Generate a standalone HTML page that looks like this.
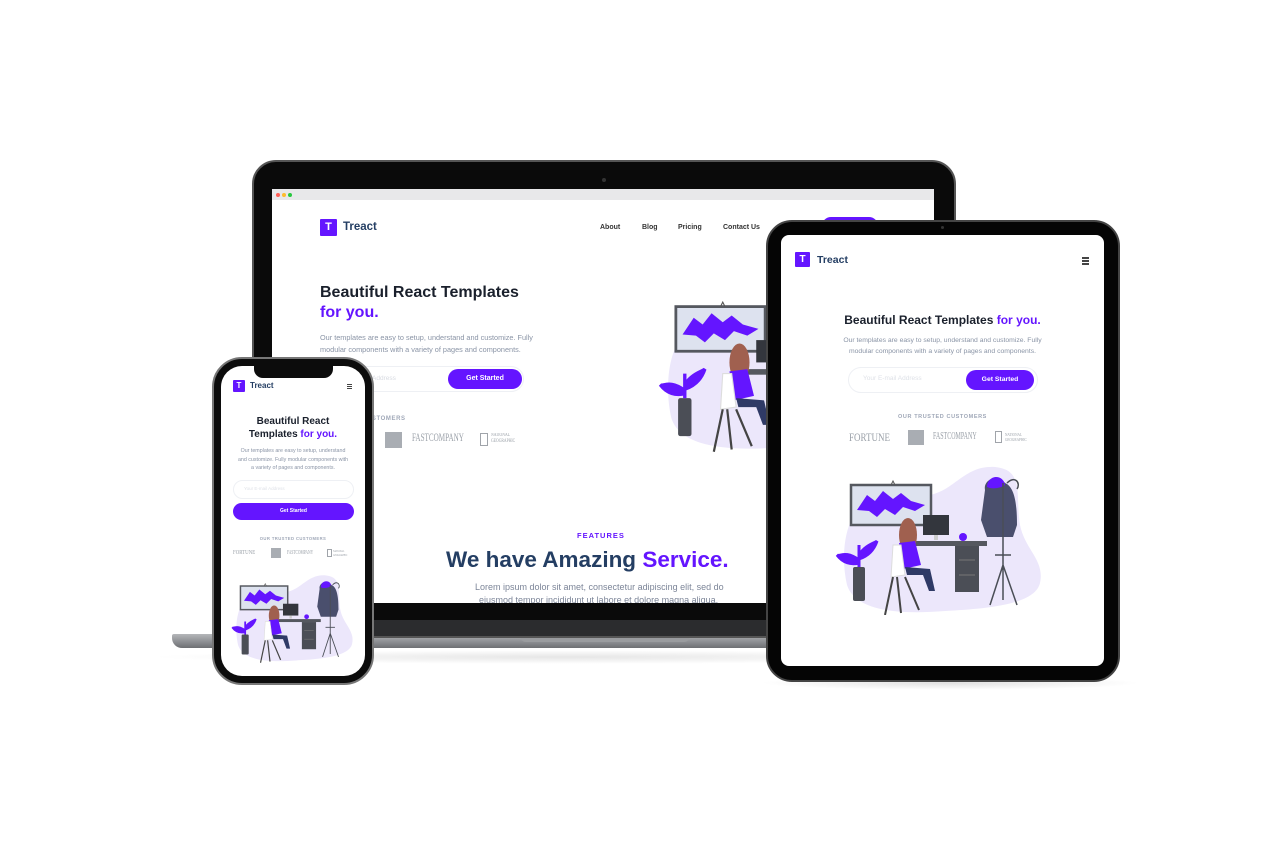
<!DOCTYPE html>
<html><head><meta charset="utf-8"><style>
*{margin:0;padding:0;box-sizing:border-box}
body{width:1280px;height:853px;background:#fff;position:relative;overflow:hidden;font-family:"Liberation Sans",Arial,sans-serif}
.a{position:absolute}
.t{position:absolute;white-space:nowrap;line-height:1}
.b{font-weight:bold}
.p{color:#6415ff}
.d{color:#243e63}
.g{color:#8a94a6}
.logo{position:absolute;background:#6415ff;color:#fff;font-weight:bold;text-align:center;border-radius:1px}
.btn{position:absolute;background:#6415ff;color:#fff;font-weight:bold;text-align:center;border-radius:99px}
.pill{position:absolute;border:1px solid #eef0f4;border-radius:99px;background:#fff}
.lg{position:absolute;color:#9aa0a8;font-family:"Liberation Serif",serif;white-space:nowrap;line-height:1;transform-origin:0 0;transform:scaleX(.75)}
.box{position:absolute;background:#a9adb3}
.hb{position:absolute;height:1.6px;background:#444}
</style></head><body>
<svg width="0" height="0" style="position:absolute">
<defs>
<g id="il">
<path d="M30 40 C10 50 5 90 12 120 C20 145 60 150 110 146 C150 144 200 140 205 118 C210 95 190 85 185 60 C180 30 190 5 160 2 C130 0 120 25 95 30 C70 34 45 30 30 40Z" fill="#ece7fb"/>
<rect x="16" y="20" width="80" height="40" fill="#dde2ef" stroke="#55585f" stroke-width="2.5"/>
<path d="M22 45 L32 30 L40 36 L48 26 L58 34 L66 28 L76 36 L90 40 L80 46 L68 42 L60 50 L50 44 L42 52 L34 46 Z" fill="#6415ff"/>
<path d="M56 20 L58 16 L60 20" stroke="#555" fill="none"/>
<rect x="88" y="50" width="26" height="20" fill="#33363d"/>
<rect x="99" y="70" width="4" height="5" fill="#ccc"/>
<rect x="70" y="76" width="82" height="5" fill="#55585f"/>
<rect x="120" y="81" width="24" height="46" fill="#4b4e56"/>
<line x1="124" y1="95" x2="140" y2="95" stroke="#777"/><line x1="124" y1="110" x2="140" y2="110" stroke="#777"/>
<circle cx="128" cy="72" r="4" fill="#6415ff"/>
<ellipse cx="73" cy="70" rx="9" ry="17" fill="#a0604f"/>
<path d="M64 78 L80 76 L86 100 L68 104 Z" fill="#6415ff"/>
<path d="M58 80 L66 80 L70 110 L56 112 Z" fill="#fff" stroke="#ddd"/>
<path d="M70 102 L95 104 L100 126 L94 126 L88 110 L72 110Z" fill="#2f3a66"/>
<path d="M58 112 L50 150 M62 112 L66 148 M70 112 L84 145" stroke="#444" stroke-width="2"/>
<rect x="18" y="102" width="12" height="34" rx="2" fill="#4b4e56"/>
<path d="M24 102 L24 80 M24 95 C10 85 5 92 2 90 C8 98 16 100 24 98 M24 90 C30 80 40 78 42 76 C38 88 30 92 24 94" stroke="#6415ff" stroke-width="3" fill="#6415ff"/>
<path d="M150 25 C148 15 162 8 170 18 C180 22 182 40 182 60 L178 72 L152 72 L146 55 Z" fill="#4a4f6d"/>
<path d="M152 22 C152 10 168 8 170 20 C164 24 156 24 152 22Z" fill="#6415ff"/>
<path d="M168 18 L168 135 M168 100 L155 140 M168 100 L182 140 M160 90 L176 90 M172 18 C180 10 186 18 182 24" stroke="#4a4e56" stroke-width="1.5" fill="none"/>
</g>
</defs>
</svg>

<div class="a" style="left:150px;top:650px;width:830px;height:14px;border-radius:50%;background:radial-gradient(#e6e6e6,rgba(255,255,255,0) 70%)"></div>
<div class="a" style="left:760px;top:676px;width:380px;height:14px;border-radius:50%;background:radial-gradient(#e0e0e0,rgba(255,255,255,0) 70%)"></div>

<!-- LAPTOP -->
<div class="a" style="left:172px;top:634px;width:790px;height:14px;background:linear-gradient(#b5b7ba,#6d6f73);border-radius:2px 2px 10px 10px"></div>
<div class="a" style="left:520px;top:636px;width:170px;height:6px;background:#9a9c9f;border-radius:0 0 6px 6px"></div>
<div class="a" style="left:252px;top:160px;width:704px;height:478px;background:#0a0a0a;border-radius:24px 24px 4px 4px;border:2px solid #555"></div>
<div class="a" style="left:254px;top:620px;width:700px;height:16px;background:#2b2c2e"></div>
<div class="a" style="left:272px;top:189px;width:662px;height:414px;background:#fff;overflow:hidden">
 <div class="a" style="left:0;top:0;width:662px;height:11px;background:#e8e8ea"></div>
 <div class="a" style="left:4px;top:4px;width:4px;height:4px;border-radius:50%;background:#ff5f57"></div>
 <div class="a" style="left:10px;top:4px;width:4px;height:4px;border-radius:50%;background:#febc2e"></div>
 <div class="a" style="left:16px;top:4px;width:4px;height:4px;border-radius:50%;background:#28c840"></div>
 <div class="logo" style="left:48px;top:30px;width:17px;height:17px;font-size:11px;line-height:17px">T</div>
 <div class="t b d" style="left:71px;top:33px;font-size:11.5px">Treact</div>
 <div class="t b" style="left:328px;top:35px;font-size:7px;color:#333">About</div>
 <div class="t b" style="left:370px;top:35px;font-size:7px;color:#333">Blog</div>
 <div class="t b" style="left:406px;top:35px;font-size:7px;color:#333">Pricing</div>
 <div class="t b" style="left:451px;top:35px;font-size:7px;color:#333">Contact Us</div>
 <div class="btn" style="left:550px;top:28px;width:56px;height:18px"></div>
 <div class="t b" style="left:48px;top:96px;font-size:16px;color:#1a202c">Beautiful React Templates</div>
 <div class="t b p" style="left:48px;top:116px;font-size:16px">for you.</div>
 <div class="t g" style="left:48px;top:145px;font-size:7.3px">Our templates are easy to setup, understand and customize. Fully</div>
 <div class="t g" style="left:48px;top:157px;font-size:7.3px">modular components with a variety of pages and components.</div>
 <div class="pill" style="left:30px;top:177px;width:222px;height:26px"></div>
 <div class="t" style="left:100px;top:187px;font-size:6.5px;color:#d8dbe2">Address</div>
 <div class="btn" style="left:176px;top:180px;width:74px;height:20px;font-size:7px;line-height:20px">Get Started</div>
 <div class="t b" style="left:90px;top:227px;font-size:6px;color:#a0a8b8;letter-spacing:.6px">CUSTOMERS</div>
 <div class="box" style="left:113px;top:243px;width:17px;height:16px"></div>
 <div class="lg" style="left:140px;top:244px;font-size:11.5px;transform:scaleX(.62)">FASTCOMPANY</div>
 <div class="a" style="left:208px;top:244px;width:8px;height:13px;border:1.3px solid #a0a4aa"></div>
 <div class="lg" style="left:219px;top:244px;font-size:5px;line-height:6px">NATIONAL<br>GEOGRAPHIC</div>
 <div class="t b p" style="left:305px;top:343px;font-size:7.5px;letter-spacing:1px">FEATURES</div>
 <div class="t b d" style="left:174px;top:360px;font-size:22.5px">We have Amazing <span class="p">Service.</span></div>
 <div class="t g" style="left:203px;top:394px;font-size:9px;color:#7c8598">Lorem ipsum dolor sit amet, consectetur adipiscing elit, sed do</div>
 <div class="t g" style="left:207px;top:407px;font-size:9px;color:#7c8598">eiusmod tempor incididunt ut labore et dolore magna aliqua.</div>
 <svg class="a" style="left:386px;top:94px" width="240" height="170" viewBox="0 0 215 150"><use href="#il"/></svg>
</div>
<div class="a" style="left:602px;top:178px;width:4px;height:4px;border-radius:50%;background:#333"></div>

<!-- TABLET -->
<div class="a" style="left:766px;top:220px;width:354px;height:462px;background:#050505;border-radius:26px;border:2px solid #444"></div>
<div class="a" style="left:781px;top:235px;width:323px;height:431px;background:#fff;border-radius:8px;overflow:hidden">
 <div class="logo" style="left:14px;top:17px;width:15px;height:15px;font-size:10px;line-height:15px">T</div>
 <div class="t b d" style="left:36px;top:20px;font-size:10.5px">Treact</div>
 <div class="hb" style="left:301px;top:22px;width:7px"></div><div class="hb" style="left:301px;top:25px;width:7px"></div><div class="hb" style="left:301px;top:28px;width:7px"></div>
 <div class="t b" style="left:0;width:323px;text-align:center;top:79px;font-size:12px;color:#1a202c">Beautiful React Templates <span class="p">for you.</span></div>
 <div class="t g" style="left:0;width:323px;text-align:center;top:103px;font-size:6.8px">Our templates are easy to setup, understand and customize. Fully</div>
 <div class="t g" style="left:0;width:323px;text-align:center;top:114px;font-size:6.8px">modular components with a variety of pages and components.</div>
 <div class="pill" style="left:67px;top:132px;width:190px;height:26px"></div>
 <div class="t" style="left:82px;top:141px;font-size:6.5px;color:#dfe2e8">Your E-mail Address</div>
 <div class="btn" style="left:185px;top:135px;width:68px;height:20px;font-size:6.8px;line-height:20px">Get Started</div>
 <div class="t b" style="left:0;width:323px;text-align:center;top:180px;font-size:5.5px;color:#a0a8b8;letter-spacing:.6px">OUR TRUSTED CUSTOMERS</div>
 <div class="lg" style="left:68px;top:196px;font-size:12px">FORTUNE</div>
 <div class="box" style="left:127px;top:195px;width:16px;height:15px"></div>
 <div class="lg" style="left:152px;top:197px;font-size:10px;transform:scaleX(.6)">FASTCOMPANY</div>
 <div class="a" style="left:214px;top:196px;width:7px;height:12px;border:1.2px solid #a0a4aa"></div>
 <div class="lg" style="left:224px;top:197px;font-size:4.5px;line-height:5px">NATIONAL<br>GEOGRAPHIC</div>
 <svg class="a" style="left:54px;top:230px" width="215" height="150" viewBox="0 0 215 150"><use href="#il"/></svg>
</div>
<div class="a" style="left:941px;top:226px;width:3px;height:3px;border-radius:50%;background:#333"></div>

<!-- PHONE -->
<div class="a" style="left:212px;top:357px;width:162px;height:328px;background:#0c0c0c;border-radius:30px;border:2px solid #777"></div>
<div class="a" style="left:221px;top:366px;width:144px;height:310px;background:#fff;border-radius:21px;overflow:hidden">
 <div class="a" style="left:33px;top:0;width:79px;height:12px;background:#0c0c0c;border-radius:0 0 9px 9px"></div>
 <div class="logo" style="left:12px;top:14px;width:12px;height:12px;font-size:8px;line-height:12px">T</div>
 <div class="t b d" style="left:29px;top:16px;font-size:8px">Treact</div>
 <div class="hb" style="left:126px;top:18px;width:5px;height:1.2px"></div><div class="hb" style="left:126px;top:20px;width:5px;height:1.2px"></div><div class="hb" style="left:126px;top:22px;width:5px;height:1.2px"></div>
 <div class="t b" style="left:0;width:144px;text-align:center;top:51px;font-size:10px;color:#1a202c">Beautiful React</div>
 <div class="t b" style="left:0;width:144px;text-align:center;top:64px;font-size:10px;color:#1a202c">Templates <span class="p">for you.</span></div>
 <div class="t g" style="left:0;width:144px;text-align:center;top:83px;font-size:5.3px">Our templates are easy to setup, understand</div>
 <div class="t g" style="left:0;width:144px;text-align:center;top:92px;font-size:5.3px">and customize. Fully modular components with</div>
 <div class="t g" style="left:0;width:144px;text-align:center;top:100px;font-size:5.3px">a variety of pages and components.</div>
 <div class="pill" style="left:12px;top:114px;width:121px;height:19px"></div>
 <div class="t" style="left:23px;top:121px;font-size:4.5px;color:#dfe2e8">Your E-mail Address</div>
 <div class="btn" style="left:12px;top:137px;width:121px;height:17px;font-size:5px;line-height:17px">Get Started</div>
 <div class="t b" style="left:0;width:144px;text-align:center;top:171px;font-size:4.2px;color:#a0a8b8;letter-spacing:.4px">OUR TRUSTED CUSTOMERS</div>
 <div class="lg" style="left:12px;top:184px;font-size:6.5px">FORTUNE</div>
 <div class="box" style="left:50px;top:182px;width:10px;height:10px"></div>
 <div class="lg" style="left:66px;top:184px;font-size:6px;transform:scaleX(.6)">FASTCOMPANY</div>
 <div class="a" style="left:106px;top:183px;width:5px;height:8px;border:1px solid #a0a4aa"></div>
 <div class="lg" style="left:112px;top:184px;font-size:3px;line-height:3.5px">NATIONAL<br>GEOGRAPHIC</div>
 <svg class="a" style="left:10px;top:208px" width="127" height="89" viewBox="0 0 215 150"><use href="#il"/></svg>
</div>
</body></html>
